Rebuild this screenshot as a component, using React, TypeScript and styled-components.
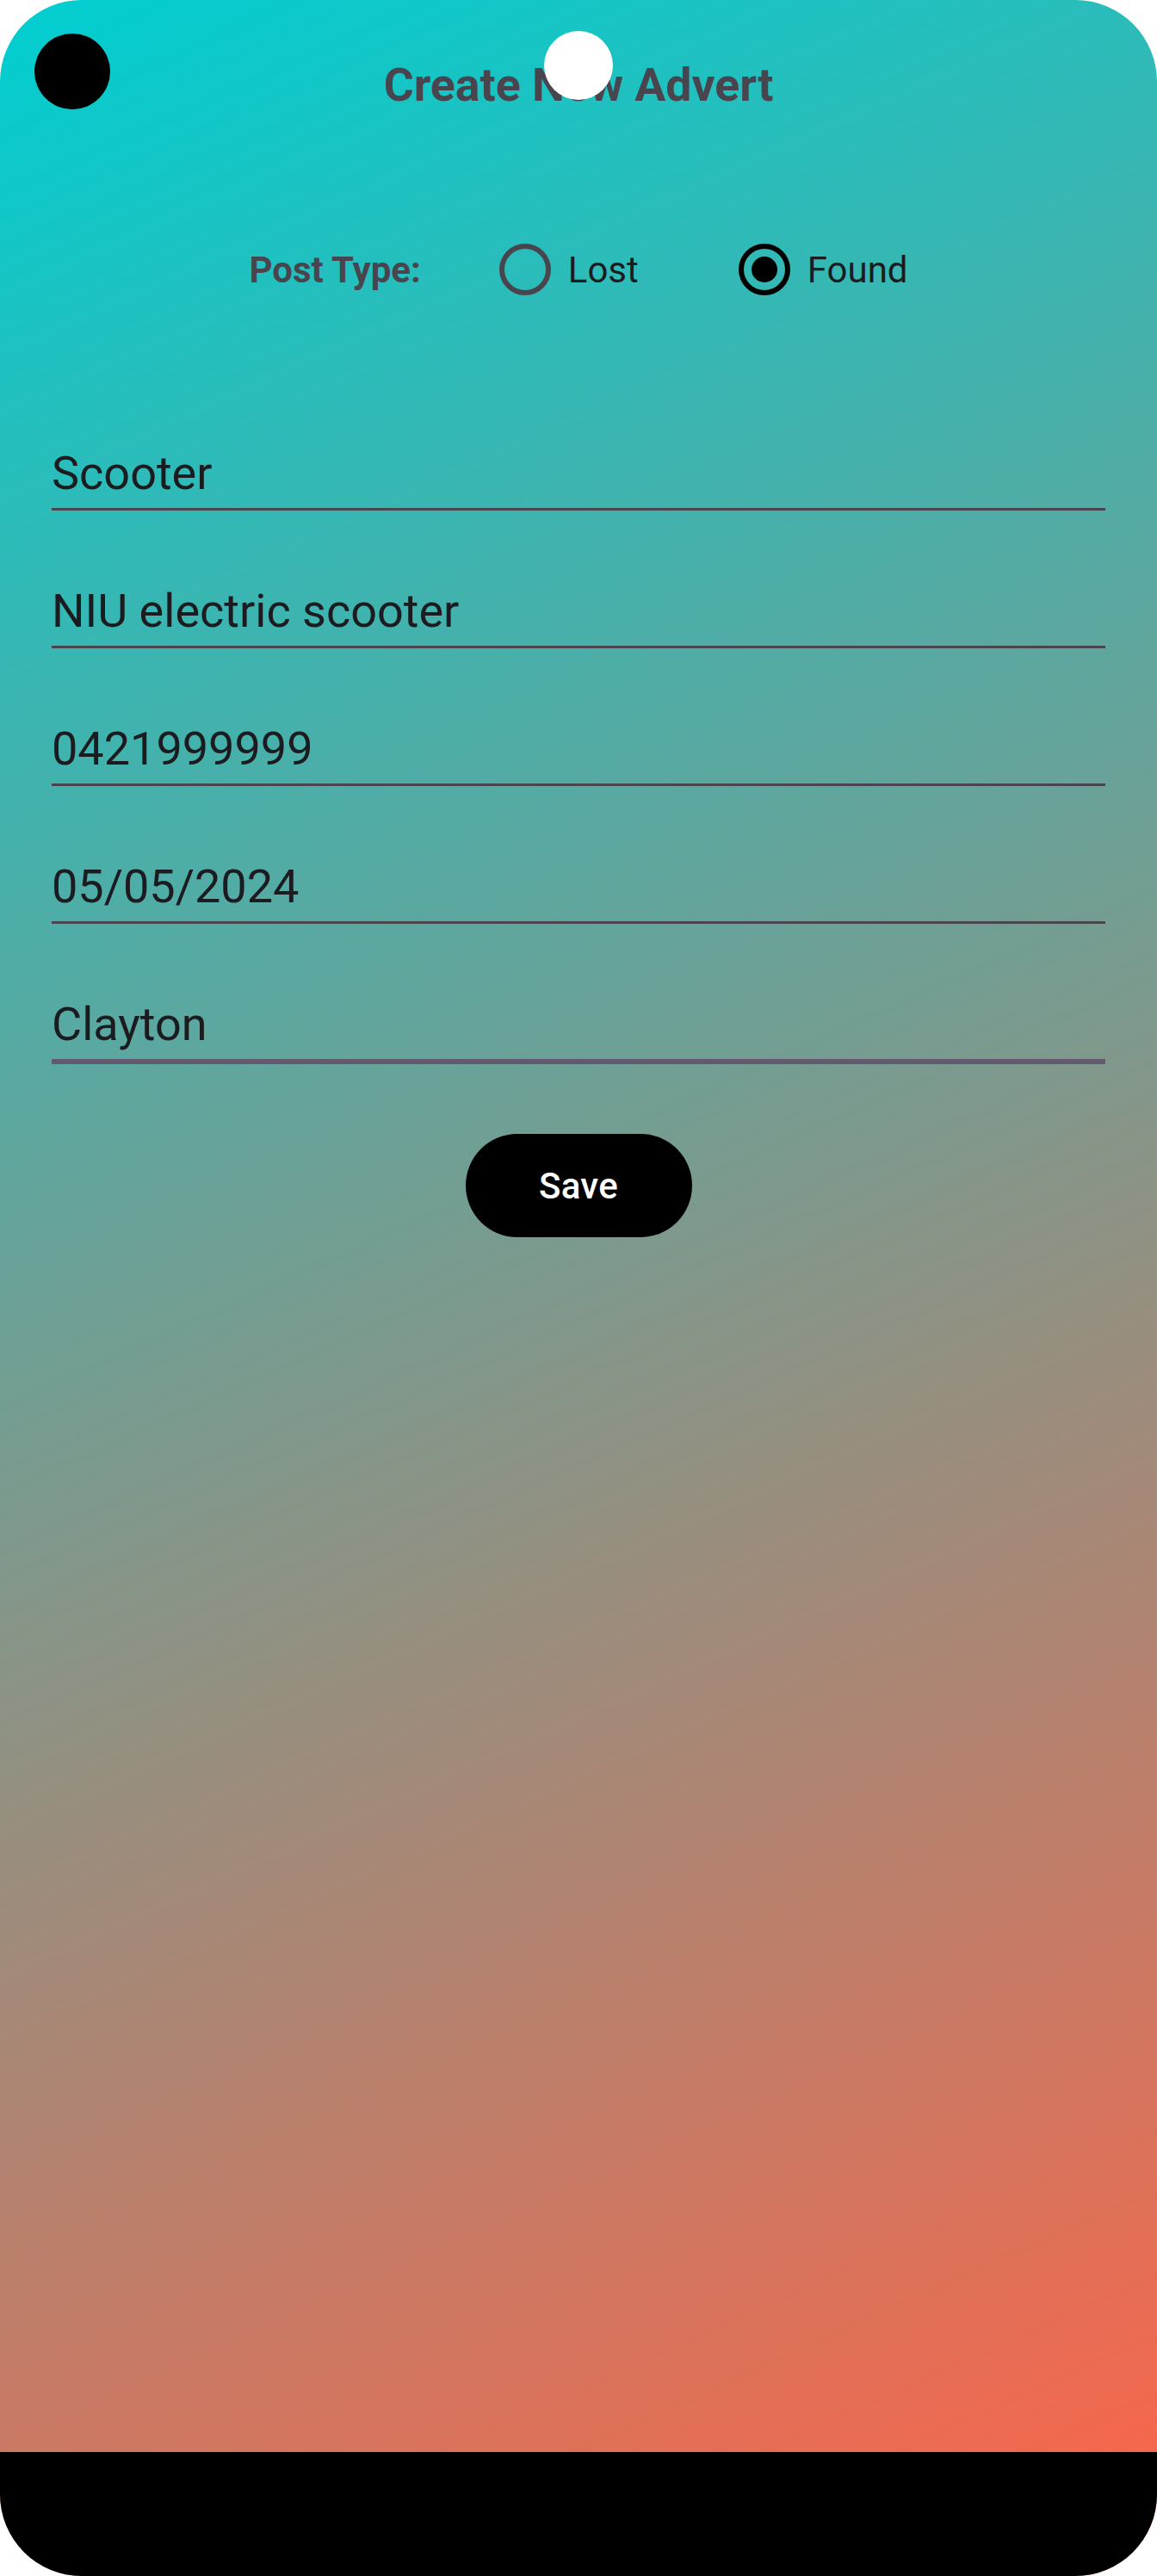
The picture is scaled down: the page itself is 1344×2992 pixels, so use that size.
import React from "react";
import styled, { createGlobalStyle } from "styled-components";

const GlobalStyle = createGlobalStyle`
  html, body {
    margin: 0;
    padding: 0;
    background: #ffffff;
  }
  * { box-sizing: border-box; }
  #root { width: 1344px; }
`;

const Screen = styled.div`
  position: relative;
  width: 1344px;
  height: 2992px;
  border-radius: 95px;
  overflow: hidden;
  background: linear-gradient(155.8deg, #00ced1 0%, #ff6347 100%);
  display: flex;
  flex-direction: column;
  font-family: Roboto, "Noto Sans", sans-serif;
`;

const Content = styled.main`
  flex: 1;
  display: flex;
  flex-direction: column;
  padding: 72px 60px 0;
`;

const Title = styled.h1`
  margin: 0;
  text-align: center;
  font-size: 53.6px;
  line-height: 54px;
  font-weight: 700;
  color: #49454f;
`;

const PostTypeRow = styled.div`
  margin-top: 157px;
  height: 60px;
  display: flex;
  align-items: center;
  justify-content: center;
  padding-left: 0;
`;

const Label = styled.span`
  font-size: 42px;
  line-height: 62px;
  padding-top: 2px;
  font-weight: 700;
  color: #49454f;
  margin-right: 91px;
`;

const Option = styled.label<{ $last?: boolean }>`
  display: flex;
  align-items: center;
  gap: 20px;
  margin-right: ${(p) => (p.$last ? "0" : "116px")};
  font-size: 42px;
  line-height: 62px;
  color: #1c1b1f;
`;

const OptionText = styled.span`
  padding-top: 2px;
`;

const RadioRing = styled.span<{ $checked?: boolean }>`
  width: 60px;
  height: 60px;
  border-radius: 50%;
  border: 6px solid ${(p) => (p.$checked ? "#000000" : "#49454f")};
  display: flex;
  align-items: center;
  justify-content: center;
  &::after {
    content: "";
    width: 30px;
    height: 30px;
    border-radius: 50%;
    background: #000000;
    display: ${(p) => (p.$checked ? "block" : "none")};
  }
`;

const Fields = styled.div`
  margin-top: 90px;
  display: flex;
  flex-direction: column;
`;

const Field = styled.div<{ $focused?: boolean }>`
  height: ${(p) => (p.$focused ? 163 : 160)}px;
  display: flex;
  align-items: flex-end;
  padding-bottom: 8px;
  border-bottom: ${(p) => (p.$focused ? "6px solid #635a70" : "3px solid #49454f")};
  font-size: 54px;
  line-height: 65px;
  color: #1c1b1f;
`;

const SaveButton = styled.button`
  align-self: center;
  margin-top: 81px;
  width: 263px;
  height: 120px;
  border: none;
  border-radius: 60px;
  background: #000000;
  color: #ffffff;
  font-family: Roboto, "Noto Sans", sans-serif;
  font-size: 42px;
  font-weight: 500;
  letter-spacing: 0.3px;
  padding: 0;
`;

const NavBar = styled.div`
  height: 144px;
  background: #000000;
`;

const Dot = styled.span<{ $size: number; $x: number; $y: number; $color: string }>`
  position: absolute;
  left: ${(p) => p.$x}px;
  top: ${(p) => p.$y}px;
  width: ${(p) => p.$size}px;
  height: ${(p) => p.$size}px;
  border-radius: 50%;
  background: ${(p) => p.$color};
`;

const fields = [
  "Scooter",
  "NIU electric scooter",
  "0421999999",
  "05/05/2024",
  "Clayton",
];

export default function App() {
  return (
    <>
      <GlobalStyle />
      <Screen>
        <Content>
          <Title>Create New Advert</Title>
          <PostTypeRow>
            <Label>Post Type:</Label>
            <Option>
              <RadioRing />
              <OptionText>Lost</OptionText>
            </Option>
            <Option $last>
              <RadioRing $checked />
              <OptionText>Found</OptionText>
            </Option>
          </PostTypeRow>
          <Fields>
            {fields.map((f, i) => (
              <Field key={f} $focused={i === fields.length - 1}>
                {f}
              </Field>
            ))}
          </Fields>
          <SaveButton>Save</SaveButton>
        </Content>
        <NavBar />
        <Dot $size={88} $x={40} $y={39} $color="#000000" />
        <Dot $size={80} $x={632} $y={36} $color="#ffffff" />
      </Screen>
    </>
  );
}
